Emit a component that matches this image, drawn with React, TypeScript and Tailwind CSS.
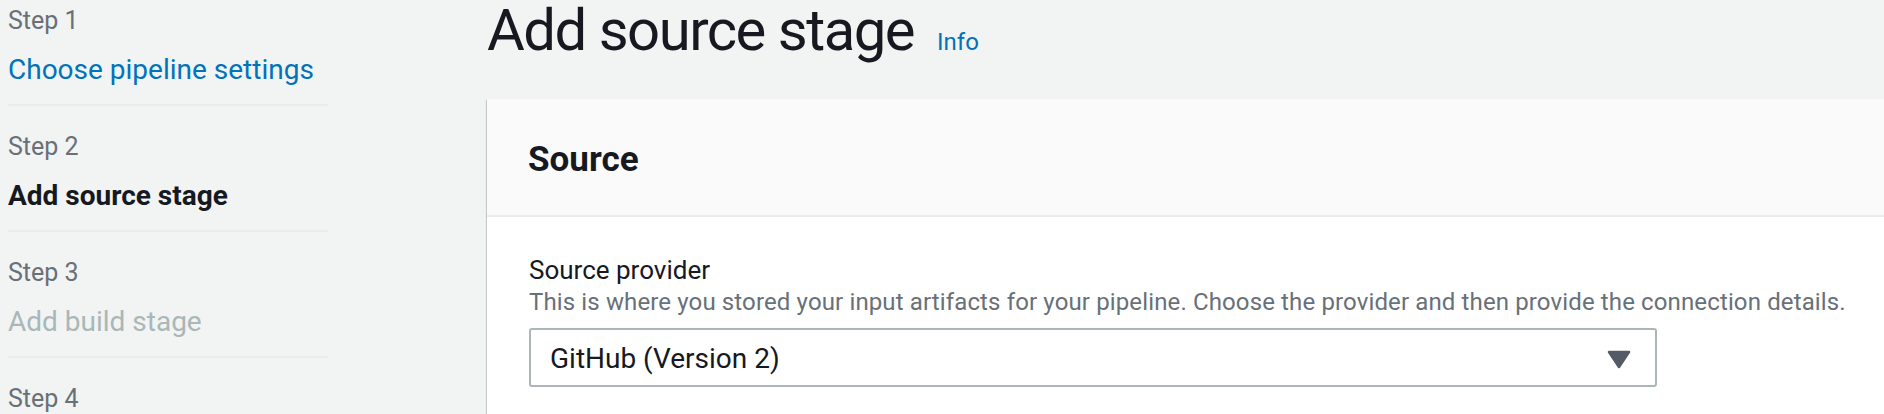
const steps = [
  { label: "Step 1", title: "Choose pipeline settings", state: "done" },
  { label: "Step 2", title: "Add source stage", state: "current" },
  { label: "Step 3", title: "Add build stage", state: "disabled" },
  { label: "Step 4", title: "Add deploy stage", state: "disabled" },
];

function StepNav() {
  return (
    <nav className="w-[320px] shrink-0">
      <ul>
        {steps.map((step, i) => (
          <li
            key={step.label}
            className={
              (i === 0 ? "pt-[6px] " : "pt-[26px] ") +
              "pb-[16px] border-b-2 border-[#eaeded]"
            }
          >
            <div className="text-[25px] leading-[30px] text-[#687078]">
              {step.label}
            </div>
            {step.state === "done" && (
              <a className="mt-[16px] block text-[28px] leading-[36px] text-[#0073bb]">
                {step.title}
              </a>
            )}
            {step.state === "current" && (
              <div className="mt-[16px] text-[28px] leading-[36px] font-bold text-[#16191f]">
                {step.title}
              </div>
            )}
            {step.state === "disabled" && (
              <div className="mt-[16px] text-[28px] leading-[36px] text-[#aab7b8]">
                {step.title}
              </div>
            )}
          </li>
        ))}
      </ul>
    </nav>
  );
}

function CaretDown() {
  return (
    <svg width="24" height="19" viewBox="0 0 24 19" className="shrink-0">
      <polygon
        points="2,2 22,2 12,17"
        fill="#545b64"
        stroke="#545b64"
        strokeWidth="2.5"
        strokeLinejoin="round"
      />
    </svg>
  );
}

export default function App() {
  return (
    <div className="h-screen overflow-hidden bg-[#f2f3f3] font-['Roboto','Liberation_Sans',sans-serif] antialiased">
      <div className="flex pl-[8px]">
        <StepNav />
        <main className="ml-[159px] flex-1 min-w-0">
          <div className="flex items-baseline gap-[23px]">
            <h1 className="text-[58px] leading-[60px] tracking-[-1.5px] font-normal text-[#16191f]">
              Add source stage
            </h1>
            <a className="text-[24px] text-[#0073bb]">Info</a>
          </div>

          <section className="mt-[39px] bg-white shadow-[0_1px_1px_0_rgba(0,28,36,0.3),1px_1px_1px_0_rgba(0,28,36,0.15),-1px_1px_1px_0_rgba(0,28,36,0.15)]">
            <div className="bg-[#fafafa] pl-[41px] pt-[39px] pb-[33px] border-b-2 border-[#eaeded]">
              <h2 className="text-[35px] leading-[44px] font-bold text-[#16191f]">
                Source
              </h2>
            </div>

            <div className="pl-[42px] pt-[37px] pb-[60px]">
              <label className="block text-[26px] leading-[32px] text-[#16191f]">
                Source provider
              </label>
              <p className="mt-[2px] text-[24px] leading-[28px] tracking-[0.13px] text-[#687078]">
                This is where you stored your input artifacts for your pipeline. Choose the provider and then provide the connection details.
              </p>
              <div className="mt-[12px] w-[1128px] h-[59px] flex items-center justify-between border-2 border-[#aab7b8] rounded-[3px] bg-white pl-[19px] pr-[24px] pt-[3px]">
                <span className="text-[28px] leading-[34px] text-[#16191f]">
                  GitHub (Version 2)
                </span>
                <CaretDown />
              </div>
            </div>
          </section>
        </main>
      </div>
    </div>
  );
}
